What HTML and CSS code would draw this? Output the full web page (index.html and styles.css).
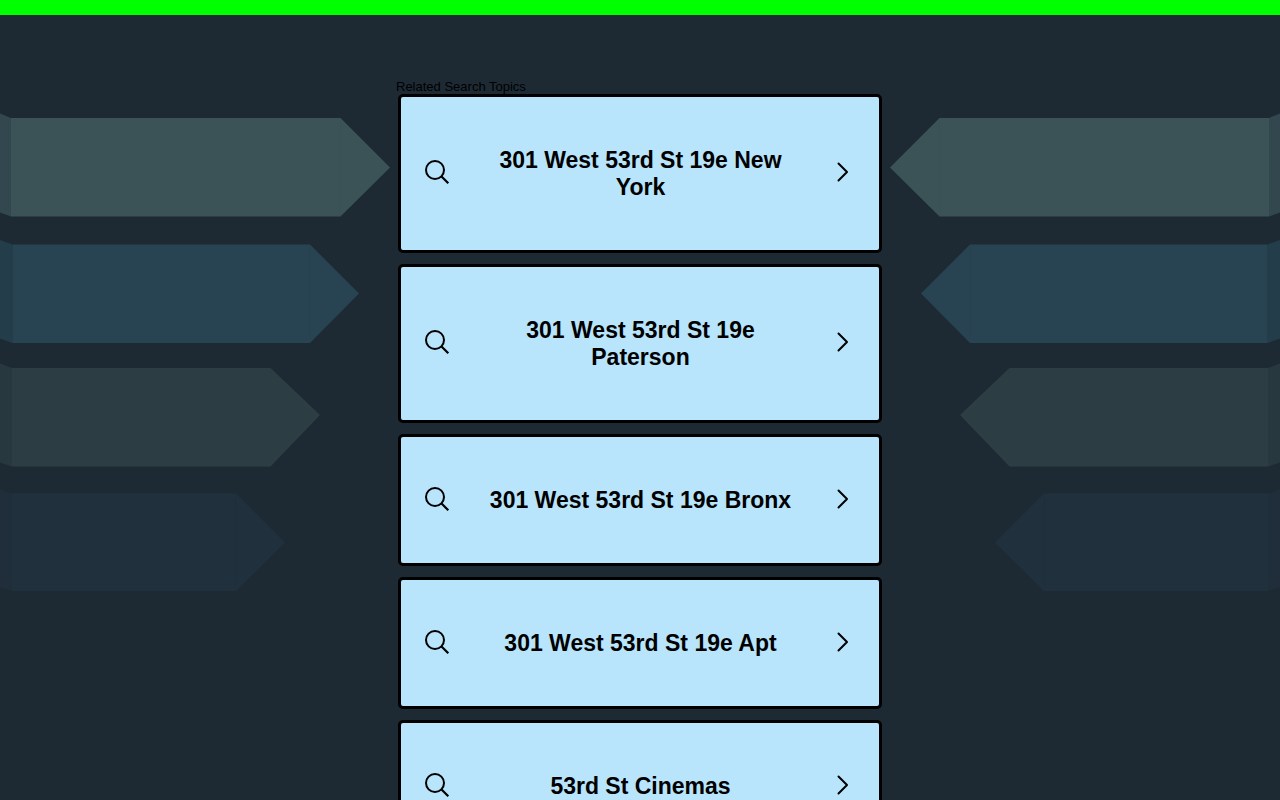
FILE: index.html
```html
<!DOCTYPE html>
<html lang="en">
<head>
    <meta charset="UTF-8">
    <title>Related Search Topics</title>
    <link rel="stylesheet" href="styles.css">
</head>
<body>
<svg class="symbols" aria-hidden="true">
    <symbol id="search" viewBox="0 0 26 26">
        <circle cx="11" cy="11" r="9" fill="none" stroke="#000" stroke-width="2"/>
        <path d="M17.3 17.3L24.3 24.3" fill="none" stroke="#000" stroke-width="2.2"/>
    </symbol>
    <symbol id="chevron" viewBox="0 0 12 20">
        <path d="M1.500 1.500L10 10L1.500 18.500" fill="none" stroke="#000" stroke-width="2" stroke-linecap="round" stroke-linejoin="round"/>
    </symbol>
    <symbol id="arrows" viewBox="0 0 400 500">
        <path fill="#32474e" d="M0 13.5L11 18V116.500L0 112.500z"/>
        <path fill="#3b5357" d="M11 18H340.500L390 67.500L340.500 116.500H11z"/>
        <path fill="#243d4b" d="M0 140L12.500 144.500V243L0 238.500z"/>
        <path fill="#284452" d="M12.500 144.500H310L359 193.500L310 243H12.500z"/>
        <path fill="#28383f" d="M0 263.500L12 268V366.500L0 362.500z"/>
        <path fill="#2c3e44" d="M12 268H270.500L320 315L270.500 366.500H12z"/>
        <path fill="#1f2e3a" d="M0 389L11.500 393.500V491L0 487.500z"/>
        <path fill="#20313d" d="M11.500 393.500H236L285 442.500L236 491H11.500z"/>
        <path fill="none" stroke="#394f54" stroke-opacity=".6" d="M340.500 18V116"/>
        <path fill="none" stroke="#26404d" stroke-opacity=".6" d="M309.500 145V243"/>
        <path fill="none" stroke="#1f2e38" stroke-opacity=".6" d="M235.500 394V491"/>
    </symbol>
</svg>
<div class="bar"></div>
<svg class="arrows" aria-hidden="true"><use href="#arrows"/></svg>
<svg class="arrows right" aria-hidden="true"><use href="#arrows"/></svg>
<main class="topics">
    <h1>Related Search Topics</h1>
    <ul>
        <li><a href="#"><svg class="search"><use href="#search"/></svg><span>301 West 53rd St 19e New York</span><svg class="chevron"><use href="#chevron"/></svg></a></li>
        <li><a href="#"><svg class="search"><use href="#search"/></svg><span>301 West 53rd St 19e Paterson</span><svg class="chevron"><use href="#chevron"/></svg></a></li>
        <li><a href="#"><svg class="search"><use href="#search"/></svg><span>301 West 53rd St 19e Bronx</span><svg class="chevron"><use href="#chevron"/></svg></a></li>
        <li><a href="#"><svg class="search"><use href="#search"/></svg><span>301 West 53rd St 19e Apt</span><svg class="chevron"><use href="#chevron"/></svg></a></li>
        <li><a href="#"><svg class="search"><use href="#search"/></svg><span>53rd St Cinemas</span><svg class="chevron"><use href="#chevron"/></svg></a></li>
    </ul>
</main>
</body>
</html>
```
FILE: styles.css
```css
*{box-sizing: border-box;}
body,h1,ul{margin: 0;padding: 0;}
html{scrollbar-width: none;}
body{background: #1e2a33;font-family: "Liberation Sans", Arial, sans-serif;color: #000;}
.symbols{position: absolute;width: 0;height: 0;}
.bar{height: 15px;background: #0f0;}

/* background arrows, one set per side */
.arrows{position: absolute;top: 100px;left: 0;z-index: -1;width: 400px;height: 500px;}
.arrows.right{left: auto;right: 0;transform: scaleX(-1);}

.topics{max-width: 488px;margin: 64px auto 0;padding: 0 2px;}
.topics h1{margin-left: -2px;font-size: 13px;line-height: 15px;font-weight: 400;}
.topics ul{display: flex;flex-direction: column;gap: 11px;list-style: none;}
.topics a{
    display: flex;align-items: center;
    padding: 50px 30px 49px 23px;
    border: 3px solid #000;border-radius: 5px;
    background: #b8e5fc;
    color: #000;text-decoration: none;
}
.topics span{flex: 1;padding: 0 37px 0 31px;font-size: 23px;line-height: 27px;font-weight: 700;text-align: center;}
.search{width: 26px;height: 26px;margin-top: -4px;}
.chevron{width: 12px;height: 20px;margin-top: -4px;}
```
